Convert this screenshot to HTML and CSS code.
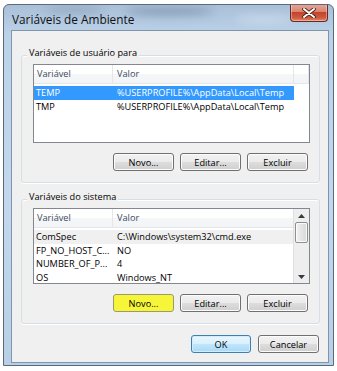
FILE: index.html
```html
<!DOCTYPE html>
<html>
<head>
<meta charset="utf-8">
<link rel="stylesheet" href="styles.css">
</head>
<body>
<div class="win">
  <div class="titlebar">
    <span class="blur b1"></span><span class="blur b2"></span><span class="blur b3"></span>
    <span class="title">Variáveis de Ambiente</span>
    <span class="close"><svg width="14" height="10" viewBox="0 0 14 10"><path d="M2 1 L12 9 M12 1 L2 9" stroke="#4a1a12" stroke-width="3.6" stroke-linecap="round"/><path d="M2 1 L12 9 M12 1 L2 9" stroke="#ffffff" stroke-width="2" stroke-linecap="round"/></svg></span>
  </div>
  <div class="client">
    <div class="group g1">
      <div class="legend">Variáveis de usuário para</div>
      <div class="list l1">
        <div class="hdr"><span class="hc c1">Variável</span><span class="hc c2">Valor</span><span class="hc c3"></span></div>
        <div class="row sel"><span class="c1">TEMP</span><span class="c2">%USERPROFILE%\AppData\Local\Temp</span></div>
        <div class="row"><span class="c1">TMP</span><span class="c2">%USERPROFILE%\AppData\Local\Temp</span></div>
      </div>
      <div class="btns">
        <button class="btn">Novo...</button>
        <button class="btn">Editar...</button>
        <button class="btn">Excluir</button>
      </div>
    </div>
    <div class="group g2">
      <div class="legend">Variáveis do sistema</div>
      <div class="list l2">
        <div class="lbody">
          <div class="hdr"><span class="hc c1">Variável</span><span class="hc c2">Valor</span></div>
          <div class="row gray"><span class="c1">ComSpec</span><span class="c2">C:\Windows\system32\cmd.exe</span></div>
          <div class="row"><span class="c1">FP_NO_HOST_C...</span><span class="c2">NO</span></div>
          <div class="row"><span class="c1">NUMBER_OF_P...</span><span class="c2">4</span></div>
          <div class="row"><span class="c1">OS</span><span class="c2">Windows_NT</span></div>
        </div>
        <div class="sbar">
          <span class="arr"><svg width="7" height="4" viewBox="0 0 7 4"><path d="M0 4 L3.5 0 L7 4 Z" fill="#3a3a3a"/></svg></span>
          <span class="thumb"></span>
          <span class="track"></span>
          <span class="arr"><svg width="7" height="4" viewBox="0 0 7 4"><path d="M0 0 L3.5 4 L7 0 Z" fill="#3a3a3a"/></svg></span>
        </div>
      </div>
      <div class="btns">
        <button class="btn yellow">Novo...</button>
        <button class="btn">Editar...</button>
        <button class="btn">Excluir</button>
      </div>
    </div>
    <div class="footer">
      <button class="btn ok focus">OK</button>
      <button class="btn">Cancelar</button>
    </div>
  </div>
</div>
</body>
</html>
```
FILE: styles.css
```css
html, body {
  margin: 0;
  padding: 0;
  background: #ffffff;
}
body {
  width: 337px;
  height: 371px;
  overflow: hidden;
  font-family: "Open Sans", "Noto Sans", sans-serif;
  font-size: 9.2px;
  color: #000;
}
.win {
  margin: 4px 0 0 3px;
  width: 329px;
  height: 360px;
  border: 1px solid #5a6a7c;
  border-radius: 6px 6px 0 0;
  background: linear-gradient(to bottom, #a9c0d8 0px, #bcd2e9 30px, #c3d8ee 200px, #b8cfe6 100%);
  display: flex;
  flex-direction: column;
  overflow: hidden;
}
.titlebar {
  position: relative;
  height: 25px;
  flex: none;
}
.blur {
  position: absolute;
  border-radius: 50%;
  filter: blur(4px);
  background: rgba(90, 110, 135, 0.35);
}
.b1 { left: 40px; top: 2px; width: 60px; height: 6px; }
.b2 { left: 120px; top: 3px; width: 90px; height: 7px; background: rgba(70, 90, 115, 0.4); }
.b3 { left: 230px; top: 10px; width: 60px; height: 8px; background: rgba(255,255,255,0.3); }
.title {
  position: absolute;
  left: 8px;
  top: 6px;
  font-size: 11.8px;
  color: #111;
}
.close {
  position: absolute;
  right: 5px;
  top: -1px;
  width: 38px;
  height: 18px;
  box-sizing: border-box;
  border: 1px solid #6a2a20;
  border-top: none;
  border-radius: 0 0 4px 4px;
  background: linear-gradient(to bottom, #e9a89a 0%, #d98570 45%, #c3442c 50%, #cc5a3e 80%, #e48a68 100%);
  box-shadow: inset 0 0 0 1px rgba(255,255,255,0.35);
  display: flex;
  align-items: center;
  justify-content: center;
}
.client {
  margin: 0 4px 2px 7px;
  flex: 1;
  border: 1px solid #7f95ab;
  background: #f0f0f0;
  padding: 0 8px 0 9px;
  display: flex;
  flex-direction: column;
}
.group {
  border: 1px solid #d5dfe5;
  border-radius: 3px;
  padding: 0 9px 0 11px;
  box-sizing: border-box;
  box-shadow: 0 1px 0 #ffffff, inset 0 1px 0 #ffffff;
}
.legend {
  margin: -9px 0 0 -6px;
  padding: 0 2px;
  width: fit-content;
  line-height: 12px;
  background: #f0f0f0;
}
.g1 { margin-top: 24px; height: 128px; }
.g2 { margin-top: 16px; height: 125px; }
.list {
  margin-top: 5px;
  height: 79px;
  border: 1px solid #828790;
  background: #fff;
  box-sizing: border-box;
}
.l2 {
  height: 76px;
  display: flex;
}
.lbody { flex: 1; overflow: hidden; }
.hdr {
  height: 19px;
  display: flex;
  background: linear-gradient(to bottom, #ffffff 0%, #ffffff 50%, #f5f6f7 51%, #f3f4f5 100%);
  border-bottom: 1px solid #e3e6ea;
  box-sizing: border-box;
  margin-bottom: 2px;
}
.hc {
  border-right: 1px solid #e3e6ea;
  color: #3b4a5c;
  line-height: 18px;
}
.c1 { width: 79px; padding-left: 2px; flex: none; box-sizing: border-box; }
.c2 { width: 181px; padding-left: 4px; flex: none; box-sizing: border-box; }
.hc.c1 { padding-left: 3px; }
.hc.c3 { flex: 1; }
.row {
  height: 13.5px;
  line-height: 13.5px;
  display: flex;
  width: 260px;
  white-space: nowrap;
}
.row.sel {
  background: #3399ff;
  color: #fff;
}
.row.gray { background: #f0f0f0; }
.sbar {
  width: 15px;
  flex: none;
  background: #eeeeee;
  border-left: 1px solid #e0e0e0;
  display: flex;
  flex-direction: column;
  align-items: center;
}
.arr {
  height: 13px;
  display: flex;
  align-items: center;
  justify-content: center;
  flex: none;
}
.thumb {
  width: 13px;
  height: 21px;
  box-sizing: border-box;
  border: 1px solid #8f8f8f;
  border-radius: 2px;
  background: linear-gradient(to right, #f3f3f3, #e4e4e4 50%, #d9d9d9);
  box-shadow: inset 0 0 0 1px #fafafa;
  flex: none;
}
.track { flex: 1; }
.btns {
  display: flex;
  justify-content: flex-end;
  gap: 6px;
  margin-top: 10px;
  padding-right: 2px;
}
.btn {
  font-family: inherit;
  font-size: 9.2px;
  color: #000;
  width: 61px;
  height: 18px;
  padding: 0;
  border: 1px solid #707070;
  border-radius: 3px;
  background: linear-gradient(to bottom, #f2f2f2 0%, #ebebeb 48%, #dddddd 52%, #cfcfcf 100%);
  box-shadow: inset 0 0 0 1px #fcfcfc;
  line-height: 15px;
}
.btn.ok { width: 60px; }
.btn.yellow {
  background: #f7f53a;
  box-shadow: none;
  border-color: #9a9a70;
}
.btn.focus {
  border-color: #3c7fb1;
  background: linear-gradient(to bottom, #eaf6fd 0%, #d9f0fc 48%, #bee6fd 52%, #a7d9f5 100%);
  box-shadow: inset 0 0 0 1px #d2ecfa;
}
.footer {
  display: flex;
  justify-content: flex-end;
  gap: 7px;
  margin-top: 11px;
  padding-right: 1px;
}
```
